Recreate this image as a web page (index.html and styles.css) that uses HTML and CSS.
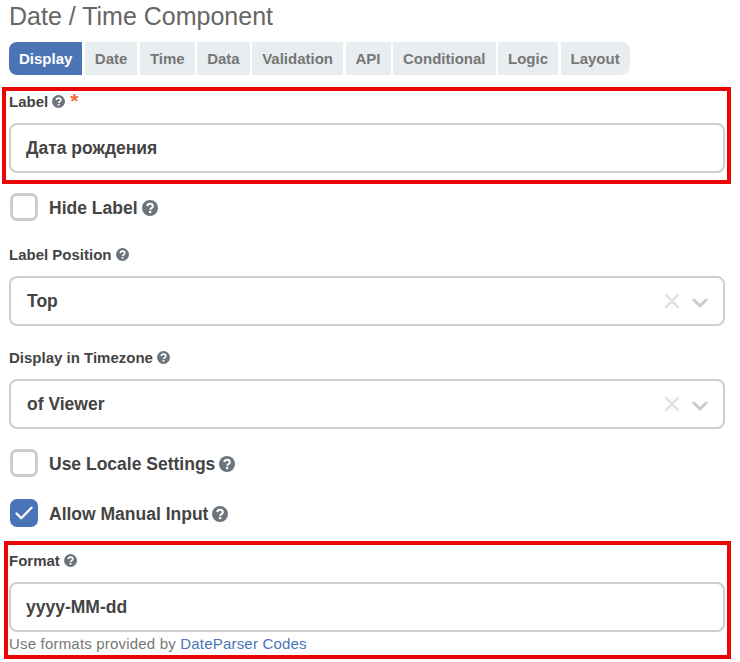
FILE: index.html
```html
<!DOCTYPE html>
<html lang="en">
<head>
<meta charset="utf-8">
<title>Date / Time Component</title>
<link rel="stylesheet" href="styles.css">
</head>
<body>
<svg class="defs" width="0" height="0" aria-hidden="true">
  <symbol id="help" viewBox="0 0 16 16">
    <circle cx="8" cy="8" r="8" fill="#6c757d"/>
    <path d="M5.3 6.2C5.5 4.5 6.6 3.8 8 3.8c1.6 0 2.8 1 2.8 2.4 0 1.9-2.6 1.9-2.6 3.6" fill="none" stroke="#fff" stroke-width="2"/>
    <circle cx="8.1" cy="12" r="1.3" fill="#fff"/>
  </symbol>
  <symbol id="clear" viewBox="0 0 16 16">
    <path d="M2 2l12 12M14 2L2 14" fill="none" stroke="#e3e3e3" stroke-width="2.6" stroke-linecap="round"/>
  </symbol>
  <symbol id="chevron" viewBox="0 0 16 10">
    <path d="M2 2l6 6 6-6" fill="none" stroke="#cbcbcb" stroke-width="3" stroke-linecap="round" stroke-linejoin="round"/>
  </symbol>
</svg>
<main class="panel">
  <h1 class="title">Date / Time Component</h1>
  <nav class="tabs">
    <a class="tab active">Display</a>
    <a class="tab">Date</a>
    <a class="tab">Time</a>
    <a class="tab">Data</a>
    <a class="tab">Validation</a>
    <a class="tab">API</a>
    <a class="tab">Conditional</a>
    <a class="tab">Logic</a>
    <a class="tab">Layout</a>
  </nav>

  <section class="highlight highlight-label">
    <div class="label">Label<svg class="help"><use href="#help"/></svg><span class="required">*</span></div>
    <div class="field">Дата рождения</div>
  </section>

  <div class="check-row hide-label"><span class="box"></span><span class="check-text">Hide Label</span><svg class="help help-lg"><use href="#help"/></svg></div>

  <section class="group">
    <div class="label">Label Position<svg class="help"><use href="#help"/></svg></div>
    <div class="field select"><span class="value">Top</span><svg class="clear"><use href="#clear"/></svg><svg class="chevron"><use href="#chevron"/></svg></div>
  </section>

  <section class="group">
    <div class="label">Display in Timezone<svg class="help"><use href="#help"/></svg></div>
    <div class="field select"><span class="value">of Viewer</span><svg class="clear"><use href="#clear"/></svg><svg class="chevron"><use href="#chevron"/></svg></div>
  </section>

  <div class="check-row locale"><span class="box"></span><span class="check-text">Use Locale Settings</span><svg class="help help-lg"><use href="#help"/></svg></div>
  <div class="check-row manual"><span class="box checked"><svg class="tick" viewBox="0 0 18 14"><path d="M1.5 7.5l4.7 4.7L16.5 1.8" fill="none" stroke="#fff" stroke-width="2.3" stroke-linecap="round" stroke-linejoin="round"/></svg></span><span class="check-text">Allow Manual Input</span><svg class="help help-lg"><use href="#help"/></svg></div>

  <section class="highlight highlight-format">
    <div class="label">Format<svg class="help"><use href="#help"/></svg></div>
    <div class="field">yyyy-MM-dd</div>
    <div class="hint">Use formats provided by <a class="link">DateParser Codes</a></div>
  </section>
</main>
</body>
</html>
```
FILE: styles.css
```css
* { box-sizing: border-box; }
body {
  margin: 0;
  background: #fff;
  color: #444;
  font-family: "Liberation Sans", Arial, sans-serif;
}
.defs { position: absolute; }
.panel { width: 740px; height: 662px; overflow: hidden; }
.title {
  margin: 0 0 0 9px;
  height: 42px;
  font-size: 25px;
  font-weight: 400;
  line-height: 32px;
  color: #666;
}
.tabs {
  display: flex;
  gap: 2.5px;
  margin-left: 9px;
  height: 33px;
}
.tab {
  padding: 0 10px;
  background: #e8edef;
  color: #777;
  font-size: 15px;
  font-weight: 700;
  line-height: 34px;
}
.tab:first-child { border-radius: 8px 0 0 8px; }
.tab:last-child { border-radius: 0 8px 8px 0; }
.tab.active { background: #4a74b6; color: #fff; }
.highlight { border: 4px solid #eb0606; }
.highlight-label {
  margin: 12px 0 0 2px;
  width: 729px;
  height: 97px;
  padding: 0 2px 0 3px;
}
.highlight-format {
  margin: 14px 0 0 4px;
  width: 727px;
  height: 118px;
  padding: 0 2px 0 1px;
}
.highlight-format .label { height: 37px; line-height: 31px; }
.highlight-format .help { margin-top: 9px; }
.label {
  display: flex;
  height: 32px;
  font-size: 15px;
  font-weight: 700;
  line-height: 22px;
}
.help { width: 13px; height: 13px; margin: 4px 0 0 4px; flex: none; }
.required {
  margin-left: 5px;
  color: #f06a38;
  font-size: 21px;
  line-height: 19px;
}
.field {
  display: flex;
  align-items: center;
  width: 716px;
  height: 50px;
  padding: 0 15px;
  border: 2px solid #cecece;
  border-radius: 8px;
  font-size: 17.5px;
  font-weight: 700;
}
.select { padding-left: 16px; }
.value { flex: 1; }
.clear { width: 16px; height: 16px; margin-right: 12px; }
.chevron { width: 16px; height: 10px; margin: 3px 0 0; }
.check-row {
  display: flex;
  align-items: center;
  height: 28px;
  margin-left: 10px;
  font-size: 17.5px;
  font-weight: 700;
}
.box {
  display: flex;
  align-items: center;
  justify-content: center;
  width: 28px;
  height: 28px;
  margin-right: 11px;
  border: 3px solid #cecece;
  border-radius: 7px;
}
.checked { background: #4a74b6; border-color: #4a74b6; }
.tick { width: 18px; height: 14px; flex: none; }
.check-text { padding-top: 2px; }
.help-lg { width: 16px; height: 16px; margin: 1px 0 0 4px; }
.hide-label { margin-top: 9px; }
.group { margin: 23px 0 0 9px; height: 83px; }
.group + .group { margin-top: 20px; }
.locale { margin-top: 19px; }
.manual { margin-top: 22px; }
.hint {
  font-size: 15px;
  line-height: 23px;
  letter-spacing: 0.19px;
  color: #777;
}
.link { color: #4a74b6; }
```
